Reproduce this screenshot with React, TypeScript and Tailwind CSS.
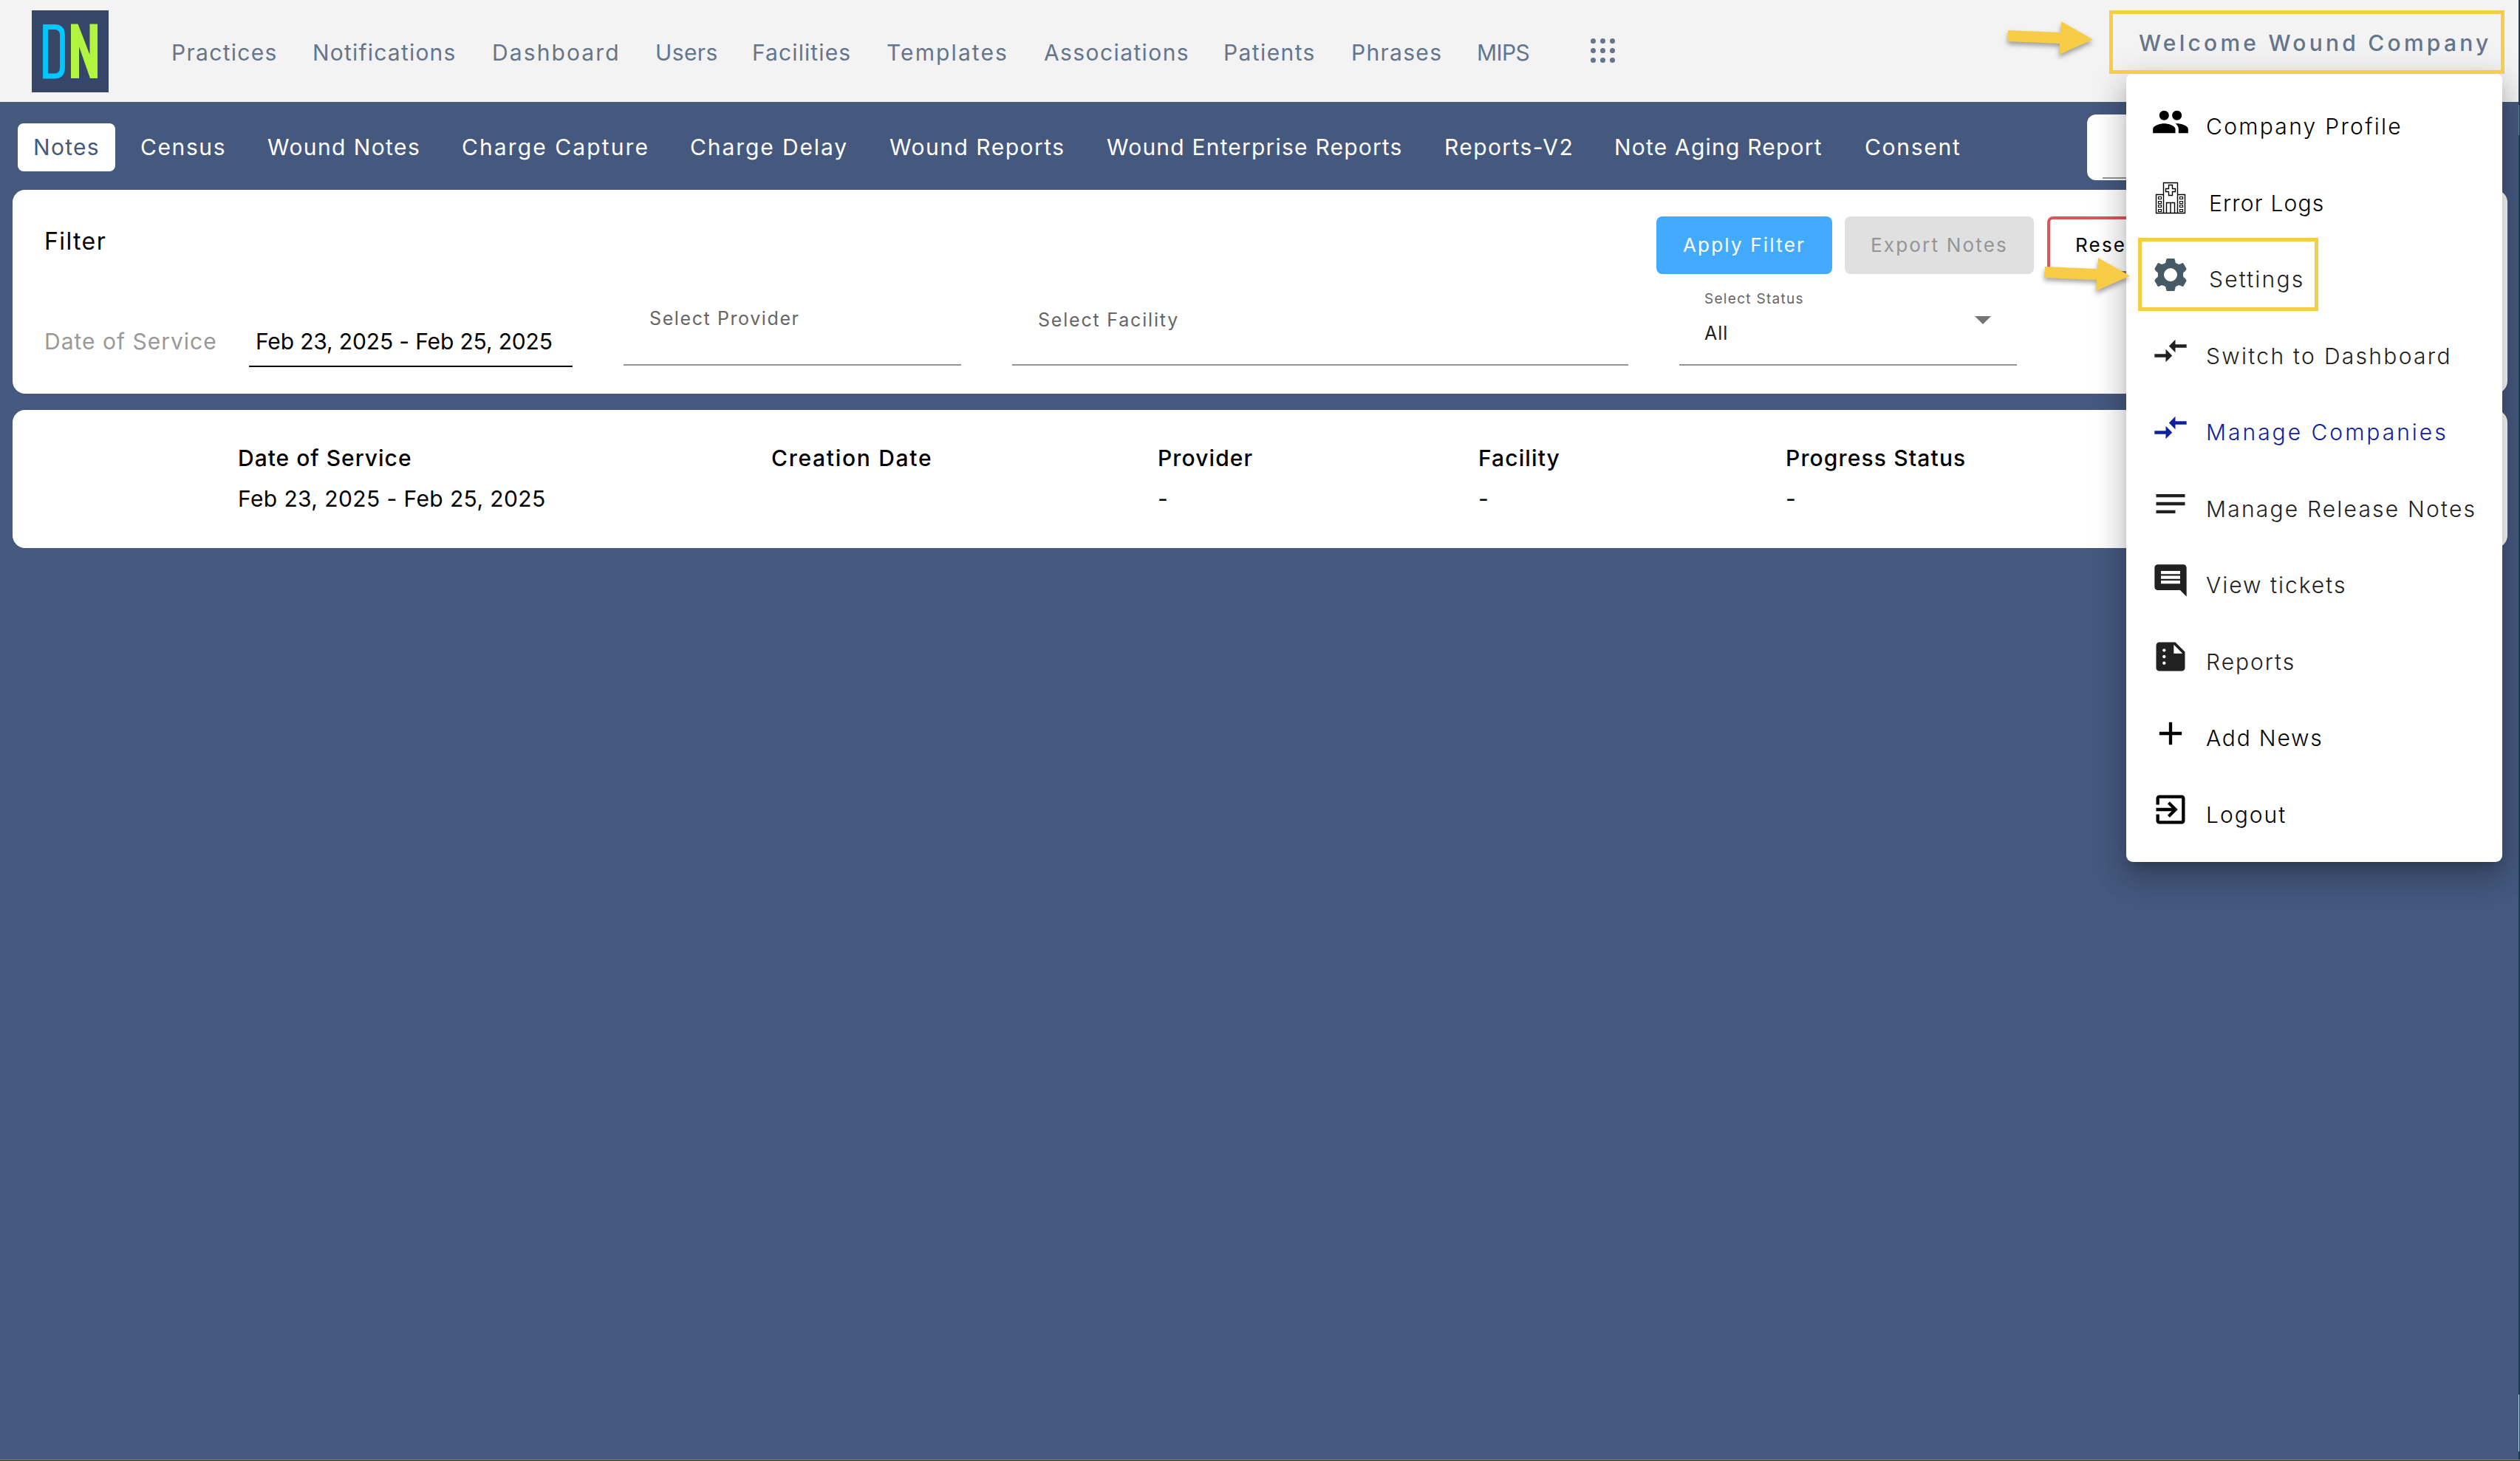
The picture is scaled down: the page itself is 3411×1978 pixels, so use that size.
import React from "react";
import {
  MdPeople,
  MdCompareArrows,
  MdNotes,
  MdComment,
  MdSummarize,
  MdAdd,
  MdExitToApp,
} from "react-icons/md";

const TOP_LINKS = [
  ["Practices", "w-[191px] tracking-[1.3px]"],
  ["Notifications", "w-[243px] tracking-[1.2px]"],
  ["Dashboard", "w-[221px] tracking-[2.1px]"],
  ["Users", "w-[131px] tracking-[0.4px]"],
  ["Facilities", "w-[182px] tracking-[1.1px]"],
  ["Templates", "w-[213px] tracking-[2.1px]"],
  ["Associations", "w-[243px] tracking-[1.4px]"],
  ["Patients", "w-[173px] tracking-[1.4px]"],
  ["Phrases", "w-[170px] tracking-[1.3px]"],
  ["MIPS", "w-[153px] tracking-[-0.6px]"],
];

const TABS = [
  ["Census", "w-[172px] tracking-[1.6px]"],
  ["Wound Notes", "w-[263px] tracking-[1.4px]"],
  ["Charge Capture", "w-[309px] tracking-[2.1px]"],
  ["Charge Delay", "w-[270px] tracking-[1.9px]"],
  ["Wound Reports", "w-[294px] tracking-[1.5px]"],
  ["Wound Enterprise Reports", "w-[457px] tracking-[1.2px]"],
  ["Reports-V2", "w-[230px] tracking-[1.4px]"],
  ["Note Aging Report", "w-[339px] tracking-[1.2px]"],
  ["Consent", "w-[301px] tracking-[1.7px]"],
];

const COLUMNS = [
  ["Date of Service", "Feb 23, 2025 - Feb 25, 2025", "w-[722px]", "tracking-[1px]"],
  ["Creation Date", "", "w-[523px]", "tracking-[1.7px]"],
  ["Provider", "-", "w-[434px]", "tracking-[1.1px]"],
  ["Facility", "-", "w-[416px]", "tracking-[1.1px]"],
  ["Progress Status", "-", "w-[400px]", "tracking-[1.15px]"],
];

function Logo() {
  return (
    <svg className="h-[111px] w-[104px] shrink-0" viewBox="0 0 104 111">
      <rect width="104" height="111" fill="#354669" />
      <path
        d="M18.5 22.5H31Q41.5 22.5 41.5 34V77Q41.5 89 31 89H18.5Z"
        fill="none"
        stroke="#00c8ff"
        strokeWidth="6.8"
      />
      <path d="M53 18.500H62.500L78.500 60V18.500H89V92H79L64 49V92H53Z" fill="#b2f540" />
    </svg>
  );
}

function Hospital() {
  return (
    <svg className="h-[44px] w-[42px]" viewBox="0 0 42 44" fill="none" stroke="#000" strokeWidth="1.4">
      <path d="M11.500 42.500V1.500H30.500V42.500" />
      <path d="M11.500 17.500H1.500V42.500H40.500V17.500H30.500" />
      <path d="M18.500 4.500H23.500V9.500H27.500V13.500H23.500V18.500H18.500V13.500H14.500V9.500H18.500Z" />
      <path d="M15.500 42.500V28.500H26.500V42.500M21 28.500V42.500" />
      <path
        d="M4.500 20.500h4v3h-4zM4.500 26.500h4v3h-4zM4.500 31.500h4v3h-4zM4.500 37.500h4v3h-4zM33.500 20.500h4v3h-4zM33.500 26.500h4v3h-4zM33.500 31.500h4v3h-4zM33.500 37.500h4v3h-4z"
        strokeWidth="1.2"
      />
    </svg>
  );
}

function Gear() {
  return (
    <svg className="h-[44px] w-[44px]" viewBox="-66 -66 132 132">
      <path
        fillRule="evenodd"
        fill="#455a64"
        stroke="#455a64"
        strokeWidth="4"
        strokeLinejoin="round"
        d="M-14 -64H14Q18 -56 18 -48Q24 -42 36 -40L50 -46L63 -24Q60 -16 50 -10Q48 0 50 10Q60 16 63 24L50 46L36 40Q24 42 18 48Q18 56 14 64H-14Q-18 56 -18 48Q-24 42 -36 40L-50 46L-63 24Q-60 16 -50 10Q-48 0 -50 -10Q-60 -16 -63 -24L-50 -46L-36 -40Q-24 -42 -18 -48Q-18 -56 -14 -64ZM29 0A29 29 0 1 0 -29 0A29 29 0 1 0 29 0Z"
      />
    </svg>
  );
}

function Arrow() {
  return (
    <svg className="h-[60px] w-[130px] overflow-visible drop-shadow-[0_4px_3px_rgba(0,0,0,0.35)]" viewBox="0 0 130 60">
      <path d="M8 12L79 15L80 0L123 24.500L77 45L78 30L7 27Z" fill="#f7cc46" />
    </svg>
  );
}

const MENU = [
  { label: "Company Profile", icon: <MdPeople size={52} />, cls: "text-black tracking-[2.3px]", pad: "pl-[21px]" },
  { label: "Error Logs", icon: <Hospital />, cls: "text-black tracking-[1.2px]", pad: "pl-[25px]" },
  { label: "Settings", icon: <Gear />, cls: "text-[#212121] tracking-[2.2px]", pad: "pl-[25px]" },
  { label: "Switch to Dashboard", icon: <MdCompareArrows size={52} />, cls: "text-[#212121] tracking-[2.3px]", pad: "pl-[21px]" },
  { label: "Manage Companies", icon: <MdCompareArrows size={52} />, cls: "text-[#0d20a0] tracking-[3px]", pad: "pl-[21px]" },
  { label: "Manage Release Notes", icon: <MdNotes size={52} />, cls: "text-[#212121] tracking-[2.2px]", pad: "pl-[21px]" },
  { label: "View tickets", icon: <MdComment size={52} />, cls: "text-[#212121] tracking-[2px]", pad: "pl-[21px]" },
  { label: "Reports", icon: <MdSummarize size={52} />, cls: "text-[#212121] tracking-[2px]", pad: "pl-[21px]" },
  { label: "Add News", icon: <MdAdd size={52} />, cls: "text-black tracking-[1.8px]", pad: "pl-[21px]" },
  { label: "Logout", icon: <MdExitToApp size={52} />, cls: "text-black tracking-[2px]", pad: "pl-[21px]" },
];

export default function App() {
  return (
    <div className="relative h-[1978px] w-[3411px] overflow-hidden whitespace-nowrap bg-[#45597f] font-['Inter',sans-serif] text-[30px] leading-[40px] text-black">
      <header className="flex h-[138px] bg-[#f3f3f3] pl-[43px] pt-[14px] text-[#65758c]">
        <Logo />
        <nav className="ml-[85px] flex pt-[37px]">
          {TOP_LINKS.map(([t, c]) => (
            <a key={t} className={c}>{t}</a>
          ))}
        </nav>
        <div className="ml-[1px] mt-[38px] grid h-[33px] w-[33px] grid-cols-3 gap-[6px]">
          {Array.from({ length: 9 }, (_, i) => (
            <i key={i} className="h-[7px] w-[7px] rounded-full bg-[#65758c]" />
          ))}
        </div>
        <div className="ml-[709px] mt-[24px] font-medium tracking-[4.25px]">Welcome Wound Company</div>
      </header>

      <nav className="flex h-[119px] pl-[24px] text-white">
        <a className="mr-[34px] mt-[29px] h-[65px] w-[132px] rounded-[8px] bg-white pl-[21px] pt-[12px] tracking-[1.3px] text-[#45597f]">Notes</a>
        <div className="flex pt-[41px]">
          {TABS.map(([t, c]) => (
            <a key={t} className={c}>{t}</a>
          ))}
        </div>
        <div className="mt-[17px] flex h-[89px] w-[500px] items-end rounded-[12px] bg-white pb-[2px] pl-[21px]">
          <div className="h-[2px] w-[400px] bg-[#949494]" />
        </div>
      </nav>

      <section className="mx-[17px] h-[276px] rounded-[17px] bg-white">
        <div className="flex h-[114px] pl-[43px] pt-[36px]">
          <h2 className="w-[2182px] pt-[12px] text-[32px] leading-[44px] tracking-[1.4px]">Filter</h2>
          <div className="flex gap-[17px] text-[26px] tracking-[2.2px]">
            <button className="h-[78px] w-[238px] rounded-[8px] bg-[#42abff] text-white">Apply Filter</button>
            <button className="h-[78px] w-[256px] rounded-[8px] bg-[#e0e0e0] text-[#959595]">Export Notes</button>
            <button className="ml-[1px] h-[78px] w-[180px] rounded-[8px] border-4 border-[#dd5559] pl-[34px] text-left">Reset</button>
          </div>
        </div>
        <div className="flex h-[126px] pl-[43px]">
          <div className="w-[277px] pt-[71px] tracking-[1px] text-[#999]">Date of Service</div>
          <div className="mr-[69px] h-[126px] w-[438px] border-b-2 border-black pl-[9px] pt-[71px] tracking-[-0.15px]">Feb 23, 2025 - Feb 25, 2025</div>
          <div className="mr-[69px] h-[124px] w-[457px] border-b-2 border-[#949494] pl-[35px] pt-[40px] text-[25px] tracking-[1.6px] text-[#666]">Select Provider</div>
          <div className="mr-[69px] h-[124px] w-[834px] border-b-2 border-[#949494] pl-[35px] pt-[42px] text-[25px] tracking-[1.8px] text-[#666]">Select Facility</div>
          <div className="flex h-[124px] w-[457px] border-b-2 border-[#949494] pl-[34px]">
            <div className="w-[366px]">
              <div className="pt-[19px] text-[19px] leading-[30px] tracking-[1.3px] text-[#666]">Select Status</div>
              <div className="pt-[11px] text-[25px] tracking-[1px] text-[#212121]">All</div>
            </div>
            <svg className="mt-[57px] h-[11px] w-[22px]" viewBox="0 0 22 11"><path d="M0 0H22L11 11Z" fill="#757575" /></svg>
          </div>
        </div>
      </section>

      <section className="mx-[17px] mt-[22px] flex h-[187px] rounded-[17px] bg-white pl-[305px] pt-[45px]">
        {COLUMNS.map(([h, v, w, tr]) => (
          <div key={h} className={w}>
            <div className={"font-medium " + tr}>{h}</div>
            <div className="mt-[15px] tracking-[0.4px]">{v}</div>
          </div>
        ))}
      </section>

      <div className="absolute left-[2878px] top-[99px] h-[1068px] w-[509px] rounded-[9px] bg-white pl-[34px] pt-[14px] font-light shadow-[0_11px_15px_-7px_rgba(0,0,0,0.2),0_24px_38px_3px_rgba(0,0,0,0.14),0_9px_46px_8px_rgba(0,0,0,0.12)]">
        {MENU.map(({ label, icon, cls, pad }) => (
          <div key={label} className={"flex h-[103.5px] items-center " + cls}>
            <div className="flex w-[52px] shrink-0 justify-center">{icon}</div>
            <span className={"ml-[1px] pt-[13px] " + pad}>{label}</span>
          </div>
        ))}
      </div>

      <div className="absolute left-[2855px] top-[14px] h-[86px] w-[535px] border-[5px] border-[#f7cc46]" />
      <div className="absolute left-[2894px] top-[322px] h-[99px] w-[244px] border-[5px] border-[#f7cc46]" />
      <div className="absolute left-[2710px] top-[29px]"><Arrow /></div>
      <div className="absolute left-[2760px] top-[349px]"><Arrow /></div>
      <div className="absolute right-0 top-0 flex h-[1978px] w-[2px] flex-col bg-[#1c3a52]">
        <div className="mt-[142px] h-[41px] w-[1px] bg-[#c85a4c]" />
        <div className="mt-[1705px] h-[77px] w-[1px] bg-[#c9d6e4]" />
      </div>
      <div className="absolute bottom-0 left-0 h-[2px] w-[3411px] border-b border-[#1c3a52] bg-[#8f8068]" />
    </div>
  );
}
